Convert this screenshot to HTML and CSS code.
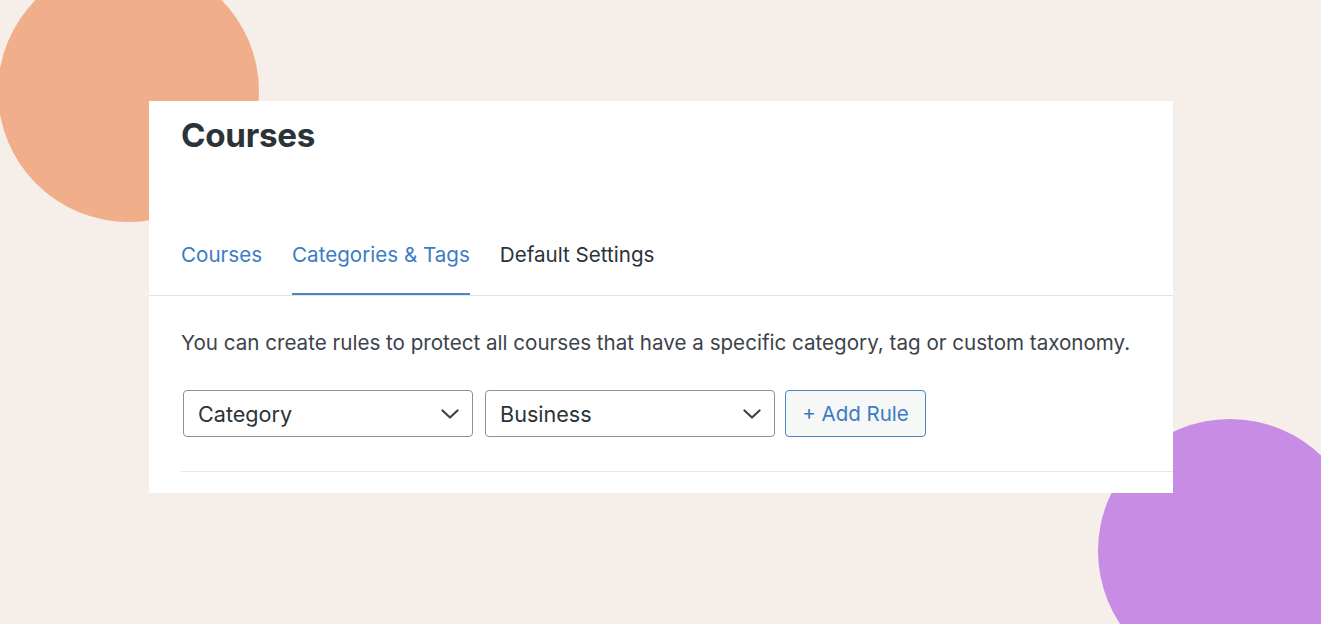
FILE: index.html
```html
<!DOCTYPE html>
<html lang="en">
<head>
<meta charset="utf-8">
<title>Courses</title>
<link rel="stylesheet" href="styles.css">
</head>
<body>
<div class="stage">
  <div class="blob blob-orange"></div>
  <div class="blob blob-purple"></div>
  <div class="panel">
    <h1 class="title">Courses</h1>
    <nav class="tabs">
      <a class="tab tab-link">Courses</a>
      <a class="tab tab-link tab-active">Categories &amp; Tags</a>
      <a class="tab tab-plain">Default Settings</a>
    </nav>
    <div class="body">
      <p class="desc">You can create rules to protect all courses that have a specific category, tag or custom taxonomy.</p>
      <div class="rule-row">
        <div class="select">
          <span class="select-label">Category</span>
          <svg class="chev" width="18" height="10" viewBox="0 0 18 10"><path d="M1.5 1.5 L9 8.5 L16.5 1.5" fill="none" stroke="#3c434a" stroke-width="2.2" stroke-linecap="round" stroke-linejoin="round"/></svg>
        </div>
        <div class="select">
          <span class="select-label">Business</span>
          <svg class="chev" width="18" height="10" viewBox="0 0 18 10"><path d="M1.5 1.5 L9 8.5 L16.5 1.5" fill="none" stroke="#3c434a" stroke-width="2.2" stroke-linecap="round" stroke-linejoin="round"/></svg>
        </div>
        <button class="add-btn">+ Add Rule</button>
      </div>
    </div>
    <div class="sep"></div>
  </div>
</div>
</body>
</html>
```
FILE: styles.css
```css
html, body {
  margin: 0;
  padding: 0;
  background: #f6efe9;
  font-family: Inter, "Liberation Sans", Arial, sans-serif;
}
.stage {
  position: relative;
  width: 1321px;
  height: 624px;
  overflow: hidden;
  padding: 101px 0 0 149px;
  box-sizing: border-box;
}
.blob {
  position: absolute;
  border-radius: 50%;
  z-index: 0;
}
.blob-orange {
  width: 261px;
  height: 261px;
  left: -2px;
  top: -39px;
  background: #f0ae8a;
}
.blob-purple {
  width: 264px;
  height: 264px;
  left: 1098px;
  top: 419px;
  background: #c78ce4;
}
.panel {
  position: relative;
  z-index: 1;
  width: 1024px;
  height: 392px;
  background: #ffffff;
  box-sizing: border-box;
  padding-top: 13px;
}
.title {
  margin: 0 0 0 32px;
  font-size: 33.2px;
  line-height: 42px;
  font-weight: 700;
  color: #2c3338;
  letter-spacing: -0.3px;
}
.tabs {
  display: flex;
  gap: 30px;
  margin-top: 86px;
  padding-left: 32px;
  border-bottom: 1px solid #e3e3e5;
}
.tab {
  font-size: 20.6px;
  line-height: 26px;
  padding-bottom: 25px;
  border-bottom: 2px solid transparent;
}
.tab-link { color: #3b7bc4; }
.tab-plain { color: #2c3338; }
.tab-active { border-bottom-color: #4a84c9; }
.body {
  padding-left: 32px;
}
.desc {
  margin: 32px 0 0 0;
  font-size: 20.6px;
  line-height: 30px;
  color: #3c434a;
}
.rule-row {
  display: flex;
  gap: 12px;
  margin-top: 32px;
  padding-left: 2px;
}
.select {
  width: 290px;
  height: 47px;
  box-sizing: border-box;
  border: 1.5px solid #8c8f94;
  border-radius: 4px;
  display: flex;
  align-items: center;
  justify-content: space-between;
  padding: 0 13px 0 14px;
}
.select-label {
  font-size: 21.6px;
  color: #2c3338;
}
.chev { display: block; }
.add-btn {
  height: 47px;
  width: 141px;
  box-sizing: border-box;
  border: 1.5px solid #4a84c9;
  border-radius: 4px;
  background: #f6f7f7;
  color: #3b7bc4;
  font-family: Inter, "Liberation Sans", Arial, sans-serif;
  font-size: 20.5px;
  padding: 0;
  margin-left: -2px;
}
.sep {
  margin: 34px 0 0 32px;
  border-top: 1.5px solid #e6e6e6;
}
```
